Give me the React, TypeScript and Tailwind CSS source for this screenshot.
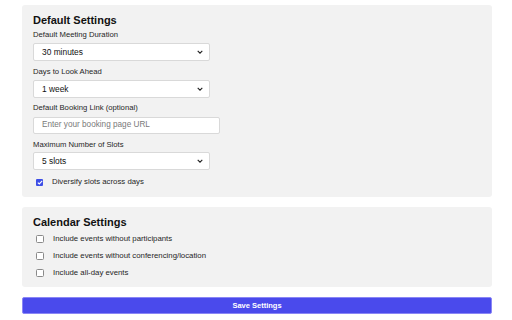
import React from 'react';

const font = { fontFamily: '"Liberation Sans", Arial, sans-serif' };

const Chevron: React.FC = () => (
    <svg width="6" height="4" viewBox="0 0 6 4" className="absolute right-[6px] top-1/2 -translate-y-1/2">
        <path d="M0.7 0.8 L3 3.1 L5.3 0.8" fill="none" stroke="#222" strokeWidth="1.1" />
    </svg>
);

const SelectBox: React.FC<{ value: string }> = ({ value }) => (
    <div className="relative flex h-[18px] w-[177px] items-center rounded-[2px] border border-[#d9d9d9] bg-white pl-[8px] text-[8.4px] text-[#111]">
        {value}
        <Chevron />
    </div>
);

const Label: React.FC<{ children: React.ReactNode; className?: string }> = ({ children, className = '' }) => (
    <div className={`h-[10px] text-[7.7px] font-medium leading-[10px] text-[#262626] ${className}`}>{children}</div>
);

const Check: React.FC<{ checked?: boolean; label: string; className?: string }> = ({ checked, label, className = '' }) => (
    <div className={`flex h-[10px] items-center ${className}`}>
        {checked ? (
            <span className="ml-[3px] flex h-[7px] w-[7px] items-center justify-center rounded-[1px] bg-[#3d4ee6]">
                <svg width="6" height="5" viewBox="0 0 6 5">
                    <path d="M0.8 2.6 L2.3 4 L5.2 0.9" fill="none" stroke="#fff" strokeWidth="1.1" />
                </svg>
            </span>
        ) : (
            <span className="ml-[3px] h-[8px] w-[8px] rounded-[1.5px] border border-[#8a8a8a] bg-white" />
        )}
        <span className="ml-[9px] text-[7.8px] text-[#262626]">{label}</span>
    </div>
);

export default function App() {
    return (
        <div className="h-[320px] w-[512px] bg-white pl-[22px] pr-[20px] pt-[5px]" style={font}>
            <div className="h-[192px] rounded-[3px] bg-[#f2f2f2] px-[11px] pt-[8px]">
                <h2 className="h-[14px] text-[11px] font-bold leading-[14px] text-[#111]">Default Settings</h2>
                <Label className="mt-[3px]">Default Meeting Duration</Label>
                <div className="mt-[3px]">
                    <SelectBox value="30 minutes" />
                </div>
                <Label className="mt-[6px]">Days to Look Ahead</Label>
                <div className="mt-[3px]">
                    <SelectBox value="1 week" />
                </div>
                <Label className="mt-[5px]">Default Booking Link (optional)</Label>
                <div className="mt-[4px] flex h-[17px] w-[187px] items-center rounded-[2px] border border-[#d9d9d9] bg-white pl-[8px] text-[8.2px] text-[#7a7a7a]">
                    Enter your booking page URL
                </div>
                <Label className="mt-[6px]">Maximum Number of Slots</Label>
                <div className="mt-[2px]">
                    <SelectBox value="5 slots" />
                </div>
                <Check checked label="Diversify slots across days" className="mt-[7px]" />
            </div>

            <div className="mt-[10px] h-[80px] rounded-[3px] bg-[#f2f2f2] px-[11px] pt-[8px]">
                <h2 className="h-[14px] text-[11px] font-bold leading-[14px] text-[#111]">Calendar Settings</h2>
                <Check label="Include events without participants" className="mt-[5px]" />
                <Check label="Include events without conferencing/location" className="mt-[7px]" />
                <Check label="Include all-day events" className="mt-[7px]" />
            </div>

            <button className="mt-[10px] flex h-[17px] w-full items-center justify-center rounded-[2px] border border-[#8a86f5] bg-[#4a4aec] text-[7.5px] font-bold text-white">
                Save Settings
            </button>
        </div>
    );
}
